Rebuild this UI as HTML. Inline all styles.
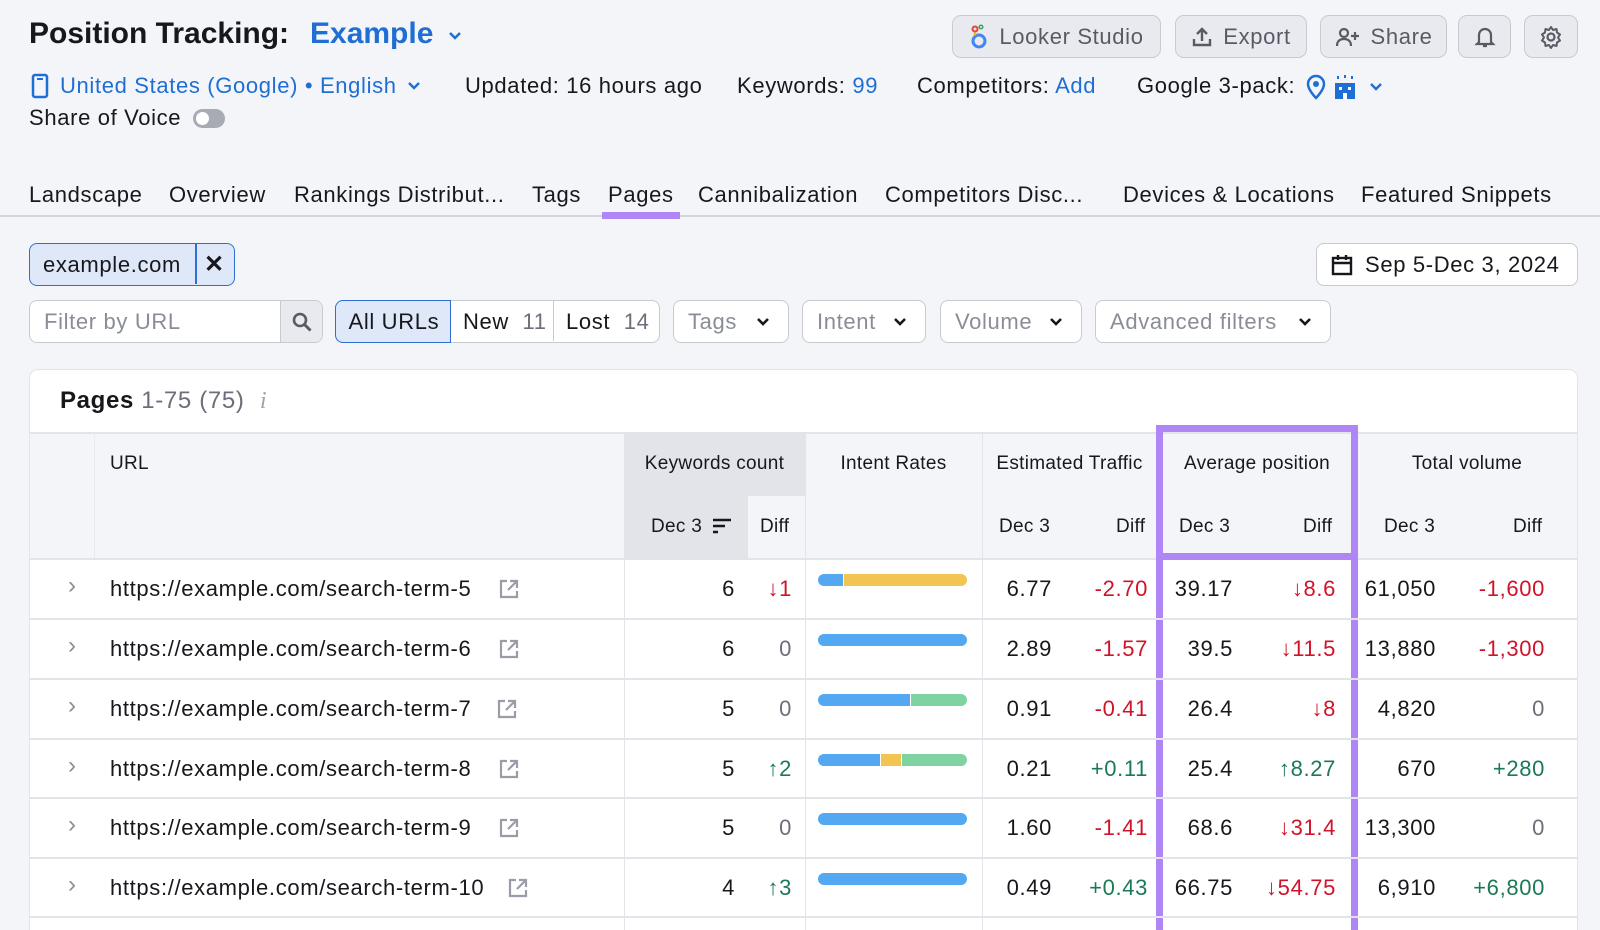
<!DOCTYPE html>
<html style="height:930px;overflow:hidden"><head><meta charset="utf-8"><style>
*{box-sizing:border-box;margin:0;padding:0}
body{width:1600px;height:930px;overflow:hidden;background:#f4f5f9;font-family:"Liberation Sans",sans-serif;color:#17181c;position:relative;font-size:22px;letter-spacing:0.65px}
.a{position:absolute;white-space:nowrap}
.blue{color:#1f6ed4}
.btn{position:absolute;border:1.5px solid #c8cad2;background:#e9eaf0;border-radius:9px;display:flex;align-items:center;justify-content:center;gap:10px;color:#585b65;font-size:22px}
.box{position:absolute;border:1.5px solid #c8cad2;background:#fff;border-radius:8px;display:flex;align-items:center;color:#8a8d97;font-size:22px;padding-left:14px}
.card{position:absolute;left:29px;top:369px;width:1549px;height:561px;background:#fff;border:1px solid #e3e4ea;border-bottom:none;border-radius:9px 9px 0 0;overflow:hidden}
.vl{position:absolute;width:1px;background:#e3e4ea}
.hl{position:absolute;height:1.5px;background:#e3e4ea}
.h{font-size:19px;letter-spacing:0.3px}
.r{text-align:right}
.red{color:#d1132a}.grn{color:#1b7a55}.gry{color:#6c6e79}
.bar{position:absolute;height:12px;border-radius:6px;overflow:hidden;display:flex;left:818px;width:149px}
.ch{position:absolute;left:68px;color:#8a8d97;font-size:24px}
</style></head><body>
<div class="a" style="left:29px;top:17px;font-size:30px;font-weight:bold;letter-spacing:0">Position Tracking:</div>
<div class="a blue" style="left:310px;top:17px;font-size:30px;font-weight:bold;letter-spacing:0">Example</div>
<svg class="a" style="left:447px;top:30px" width="16" height="12" viewBox="0 0 16 12"><path d="M3 3l5 5 5-5" stroke="#1f6ed4" stroke-width="2.5" fill="none"/></svg>

<div class="btn" style="left:952px;top:15px;width:209px;height:43px"><svg width="20" height="26" viewBox="0 0 20 26"><circle cx="10" cy="17" r="6" stroke="#4285f4" stroke-width="3" fill="none"/><circle cx="6" cy="5" r="2.5" stroke="#ea4335" stroke-width="2" fill="none"/><circle cx="12" cy="3" r="1.8" stroke="#34a853" stroke-width="1.5" fill="none"/><circle cx="6" cy="10" r="1.5" fill="#fbbc04"/></svg>Looker Studio</div>
<div class="btn" style="left:1175px;top:15px;width:132px;height:43px"><svg width="22" height="22" viewBox="0 0 22 22"><path d="M11 15V3M6 8l5-5 5 5M3 13v6h16v-6" stroke="#585b65" stroke-width="2.4" fill="none"/></svg>Export</div>
<div class="btn" style="left:1320px;top:15px;width:127px;height:43px"><svg width="26" height="22" viewBox="0 0 26 22"><circle cx="9" cy="7" r="4" stroke="#585b65" stroke-width="2.2" fill="none"/><path d="M2 20c0-5 3-7 7-7s7 2 7 7M20 6v8M16 10h8" stroke="#585b65" stroke-width="2.2" fill="none"/></svg>Share</div>
<div class="btn" style="left:1458px;top:15px;width:53px;height:43px"><svg width="22" height="24" viewBox="0 0 22 24"><path d="M5 17V10a6 6 0 0112 0v7l2 2H3z M9 21h4" stroke="#585b65" stroke-width="2.2" fill="none"/></svg></div>
<div class="btn" style="left:1524px;top:15px;width:54px;height:43px"><svg width="24" height="24" viewBox="0 0 24 24"><circle cx="12" cy="12" r="3.5" stroke="#585b65" stroke-width="2.2" fill="none"/><path d="M12 2l2 3 3.5-1 .5 3.5 3 2-2 3 2 3-3 2-.5 3.5-3.5-1-2 3-2-3-3.5 1-.5-3.5-3-2 2-3-2-3 3-2 .5-3.5 3.5 1z" stroke="#585b65" stroke-width="2" fill="none" stroke-linejoin="round"/></svg></div>

<svg class="a" style="left:31px;top:73px" width="18" height="26" viewBox="0 0 18 26"><rect x="2" y="2" width="14" height="22" rx="2" stroke="#1f6ed4" stroke-width="2.5" fill="none"/><path d="M6 6h6" stroke="#1f6ed4" stroke-width="2"/></svg>
<div class="a blue" style="left:60px;top:73px">United States (Google) • English</div>
<svg class="a" style="left:406px;top:80px" width="16" height="12" viewBox="0 0 16 12"><path d="M3 3l5 5 5-5" stroke="#1f6ed4" stroke-width="2.4" fill="none"/></svg>
<div class="a" style="left:465px;top:73px">Updated: 16 hours ago</div>
<div class="a" style="left:737px;top:73px">Keywords: <span class="blue">99</span></div>
<div class="a" style="left:917px;top:73px">Competitors: <span class="blue">Add</span></div>
<div class="a" style="left:1137px;top:73px">Google 3-pack:</div>
<svg class="a" style="left:1305px;top:73px" width="90" height="28" viewBox="0 0 90 28"><path d="M11 25s8-8 8-14a8 8 0 00-16 0c0 6 8 14 8 14z" stroke="#1f6ed4" stroke-width="2.5" fill="none"/><circle cx="11" cy="11" r="3" fill="#1f6ed4"/><rect x="30" y="10" width="20" height="16" fill="#1f6ed4"/><rect x="34" y="14" width="3" height="3" fill="#fff"/><rect x="43" y="14" width="3" height="3" fill="#fff"/><rect x="38" y="20" width="4" height="6" fill="#fff"/><path d="M33 3v3M40 2v3M47 3v3" stroke="#1f6ed4" stroke-width="2"/><path d="M66 11l5 5 5-5" stroke="#1f6ed4" stroke-width="2.4" fill="none"/></svg>
<div class="a" style="left:29px;top:105px">Share of Voice</div>
<div class="a" style="left:193px;top:109px;width:32px;height:19px;border-radius:10px;background:#a9abb4"><div style="position:absolute;left:3px;top:3px;width:13px;height:13px;border-radius:50%;background:#fff"></div></div>

<div class="a" style="left:29px;top:182px">Landscape</div>
<div class="a" style="left:169px;top:182px">Overview</div>
<div class="a" style="left:294px;top:182px">Rankings Distribut...</div>
<div class="a" style="left:532px;top:182px">Tags</div>
<div class="a" style="left:608px;top:182px">Pages</div>
<div class="a" style="left:698px;top:182px">Cannibalization</div>
<div class="a" style="left:885px;top:182px">Competitors Disc...</div>
<div class="a" style="left:1123px;top:182px">Devices &amp; Locations</div>
<div class="a" style="left:1361px;top:182px">Featured Snippets</div>
<div class="a" style="left:0;top:215px;width:1600px;height:2px;background:#d3d5dc"></div>
<div class="a" style="left:602px;top:212px;width:78px;height:7px;background:#b085f5"></div>

<div class="a" style="left:29px;top:243px;width:206px;height:43px;border:1.5px solid #2d6fd2;background:#dfe8f9;border-radius:8px">
<div class="a" style="left:13px;top:8px">example.com</div>
<div class="a" style="left:165px;top:0;width:1.5px;height:40px;background:#2d6fd2"></div>
<div class="a" style="left:174px;top:6px;font-size:24px;font-weight:bold">✕</div></div>
<div class="box" style="left:1316px;top:243px;width:262px;height:43px;color:#17181c;gap:12px"><svg width="22" height="24" viewBox="0 0 22 24"><rect x="2" y="5" width="18" height="16" stroke="#17181c" stroke-width="2.4" fill="none"/><path d="M2 10h18M7 2v5M15 2v5" stroke="#17181c" stroke-width="2.4"/></svg>Sep 5-Dec 3, 2024</div>

<div class="box" style="left:29px;top:300px;width:294px;height:43px;overflow:hidden">Filter by URL<div style="position:absolute;left:250px;top:0;width:44px;height:43px;background:#e9eaf0;border-left:1.5px solid #c8cad2"><svg style="position:absolute;left:10px;top:10px" width="22" height="22" viewBox="0 0 22 22"><circle cx="9" cy="9" r="6" stroke="#585b65" stroke-width="2.6" fill="none"/><path d="M13.5 13.5l6 6" stroke="#585b65" stroke-width="3"/></svg></div></div>
<div class="box" style="left:335px;top:300px;width:325px;height:43px;padding:0;color:#17181c;overflow:visible">
<div style="position:absolute;left:-1.5px;top:-1.5px;width:116px;height:43px;background:#dfe8f9;border:1.5px solid #2d6fd2;border-radius:8px 0 0 8px;padding:8px 0 0 13px">All URLs</div>
<div style="position:absolute;left:127px;top:8px">New <span class="gry">&nbsp;11</span></div>
<div style="position:absolute;left:217px;top:0;width:1px;height:40px;background:#c8cad2"></div>
<div style="position:absolute;left:230px;top:8px">Lost <span class="gry">&nbsp;14</span></div></div>
<div class="box" style="left:673px;top:300px;width:116px;height:43px">Tags<svg style="position:absolute;right:18px;top:16px" width="14" height="10" viewBox="0 0 14 10"><path d="M2 2l5 5 5-5" stroke="#17181c" stroke-width="2.6" fill="none"/></svg></div>
<div class="box" style="left:802px;top:300px;width:124px;height:43px">Intent<svg style="position:absolute;right:18px;top:16px" width="14" height="10" viewBox="0 0 14 10"><path d="M2 2l5 5 5-5" stroke="#17181c" stroke-width="2.6" fill="none"/></svg></div>
<div class="box" style="left:940px;top:300px;width:142px;height:43px">Volume<svg style="position:absolute;right:18px;top:16px" width="14" height="10" viewBox="0 0 14 10"><path d="M2 2l5 5 5-5" stroke="#17181c" stroke-width="2.6" fill="none"/></svg></div>
<div class="box" style="left:1095px;top:300px;width:236px;height:43px">Advanced filters<svg style="position:absolute;right:18px;top:16px" width="14" height="10" viewBox="0 0 14 10"><path d="M2 2l5 5 5-5" stroke="#17181c" stroke-width="2.6" fill="none"/></svg></div>

<div class="card"></div>
<div class="a" style="left:60px;top:387px;font-size:24px"><b>Pages</b> <span class="gry">1-75 (75)</span> <i style="color:#a0a2ab;font-family:'Liberation Serif',serif;margin-left:8px">i</i></div>
<div class="a" style="left:30px;top:433px;width:1547px;height:126px;background:#f4f5f9"></div>
<div class="a" style="left:624px;top:433px;width:181px;height:63px;background:#e3e4ea"></div>
<div class="a" style="left:624px;top:496px;width:124px;height:63px;background:#e3e4ea"></div>
<div class="hl" style="left:30px;top:432px;width:1547px"></div>
<div class="vl" style="left:94px;top:433px;height:126px;background:#e9eaef"></div>
<div class="vl" style="left:624px;top:433px;height:497px"></div>
<div class="vl" style="left:805px;top:433px;height:497px"></div>
<div class="vl" style="left:982px;top:433px;height:497px"></div>
<div class="hl" style="left:30px;top:558px;width:1547px"></div>
<div class="a h" style="left:110px;top:453px">URL</div>
<div class="a h" style="left:624px;top:453px;width:181px;text-align:center">Keywords count</div>
<div class="a h" style="left:651px;top:516px">Dec 3</div>
<svg class="a" style="left:712px;top:518px" width="20" height="18" viewBox="0 0 20 18"><path d="M1 2h18M1 8h12M1 14h5" stroke="#17181c" stroke-width="2.6"/></svg>
<div class="a h" style="left:760px;top:516px">Diff</div>
<div class="a h" style="left:805px;top:453px;width:177px;text-align:center">Intent Rates</div>
<div class="a h" style="left:982px;top:453px;width:175px;text-align:center">Estimated Traffic</div>
<div class="a h" style="left:999px;top:516px">Dec 3</div>
<div class="a h" style="left:1116px;top:516px">Diff</div>
<div class="a h" style="left:1157px;top:453px;width:200px;text-align:center">Average position</div>
<div class="a h" style="left:1179px;top:516px">Dec 3</div>
<div class="a h" style="left:1303px;top:516px">Diff</div>
<div class="a h" style="left:1357px;top:453px;width:220px;text-align:center">Total volume</div>
<div class="a h" style="left:1384px;top:516px">Dec 3</div>
<div class="a h" style="left:1513px;top:516px">Diff</div>
<div class="a" style="left:1156px;top:425px;width:202px;height:520px;border:7px solid #b085f5;border-bottom:none"></div>
<div class="a" style="left:1156px;top:553px;width:202px;height:7px;background:#b085f5"></div>

<div class="hl" style="left:30px;top:618px;width:1547px"></div>
<div class="hl" style="left:30px;top:678px;width:1547px"></div>
<div class="hl" style="left:30px;top:738px;width:1547px"></div>
<div class="hl" style="left:30px;top:797px;width:1547px"></div>
<div class="hl" style="left:30px;top:857px;width:1547px"></div>
<div class="hl" style="left:30px;top:916px;width:1547px"></div>

<div class="ch" style="top:572px">›</div>
<div class="a" style="left:110px;top:576px">https://example.com/search-term-5</div>
<div class="a r" style="left:640px;top:576px;width:95px">6</div><div class="a r red" style="left:750px;top:576px;width:42px">↓1</div>
<div class="bar" style="top:574px"><span style="width:25px;background:#54a8f2"></span><span style="flex:1;background:#f2c452;margin-left:1px"></span></div>
<div class="a r" style="left:990px;top:576px;width:62px">6.77</div><div class="a r red" style="left:1050px;top:576px;width:98px">-2.70</div>
<div class="a r" style="left:1165px;top:576px;width:68px">39.17</div><div class="a r red" style="left:1240px;top:576px;width:96px">↓8.6</div>
<div class="a r" style="left:1350px;top:576px;width:86px">61,050</div><div class="a r red" style="left:1430px;top:576px;width:115px">-1,600</div>

<div class="ch" style="top:632px">›</div>
<div class="a" style="left:110px;top:636px">https://example.com/search-term-6</div>
<div class="a r" style="left:640px;top:636px;width:95px">6</div><div class="a r gry" style="left:750px;top:636px;width:42px">0</div>
<div class="bar" style="top:634px;background:#54a8f2"></div>
<div class="a r" style="left:990px;top:636px;width:62px">2.89</div><div class="a r red" style="left:1050px;top:636px;width:98px">-1.57</div>
<div class="a r" style="left:1165px;top:636px;width:68px">39.5</div><div class="a r red" style="left:1240px;top:636px;width:96px">↓11.5</div>
<div class="a r" style="left:1350px;top:636px;width:86px">13,880</div><div class="a r red" style="left:1430px;top:636px;width:115px">-1,300</div>

<div class="ch" style="top:692px">›</div>
<div class="a" style="left:110px;top:696px">https://example.com/search-term-7</div>
<div class="a r" style="left:640px;top:696px;width:95px">5</div><div class="a r gry" style="left:750px;top:696px;width:42px">0</div>
<div class="bar" style="top:694px"><span style="width:92px;background:#54a8f2"></span><span style="flex:1;background:#7ed3a0;margin-left:1px"></span></div>
<div class="a r" style="left:990px;top:696px;width:62px">0.91</div><div class="a r red" style="left:1050px;top:696px;width:98px">-0.41</div>
<div class="a r" style="left:1165px;top:696px;width:68px">26.4</div><div class="a r red" style="left:1240px;top:696px;width:96px">↓8</div>
<div class="a r" style="left:1350px;top:696px;width:86px">4,820</div><div class="a r gry" style="left:1430px;top:696px;width:115px">0</div>

<div class="ch" style="top:752px">›</div>
<div class="a" style="left:110px;top:756px">https://example.com/search-term-8</div>
<div class="a r" style="left:640px;top:756px;width:95px">5</div><div class="a r grn" style="left:750px;top:756px;width:42px">↑2</div>
<div class="bar" style="top:754px"><span style="width:62px;background:#54a8f2"></span><span style="width:20px;background:#f2c452;margin-left:1px"></span><span style="flex:1;background:#7ed3a0;margin-left:1px"></span></div>
<div class="a r" style="left:990px;top:756px;width:62px">0.21</div><div class="a r grn" style="left:1050px;top:756px;width:98px">+0.11</div>
<div class="a r" style="left:1165px;top:756px;width:68px">25.4</div><div class="a r grn" style="left:1240px;top:756px;width:96px">↑8.27</div>
<div class="a r" style="left:1350px;top:756px;width:86px">670</div><div class="a r grn" style="left:1430px;top:756px;width:115px">+280</div>

<div class="ch" style="top:811px">›</div>
<div class="a" style="left:110px;top:815px">https://example.com/search-term-9</div>
<div class="a r" style="left:640px;top:815px;width:95px">5</div><div class="a r gry" style="left:750px;top:815px;width:42px">0</div>
<div class="bar" style="top:813px;background:#54a8f2"></div>
<div class="a r" style="left:990px;top:815px;width:62px">1.60</div><div class="a r red" style="left:1050px;top:815px;width:98px">-1.41</div>
<div class="a r" style="left:1165px;top:815px;width:68px">68.6</div><div class="a r red" style="left:1240px;top:815px;width:96px">↓31.4</div>
<div class="a r" style="left:1350px;top:815px;width:86px">13,300</div><div class="a r gry" style="left:1430px;top:815px;width:115px">0</div>

<div class="ch" style="top:871px">›</div>
<div class="a" style="left:110px;top:875px">https://example.com/search-term-10</div>
<div class="a r" style="left:640px;top:875px;width:95px">4</div><div class="a r grn" style="left:750px;top:875px;width:42px">↑3</div>
<div class="bar" style="top:873px;background:#54a8f2"></div>
<div class="a r" style="left:990px;top:875px;width:62px">0.49</div><div class="a r grn" style="left:1050px;top:875px;width:98px">+0.43</div>
<div class="a r" style="left:1165px;top:875px;width:68px">66.75</div><div class="a r red" style="left:1240px;top:875px;width:96px">↓54.75</div>
<div class="a r" style="left:1350px;top:875px;width:86px">6,910</div><div class="a r grn" style="left:1430px;top:875px;width:115px">+6,800</div>

<svg class="a" style="left:498px;top:578px" width="22" height="22" viewBox="0 0 22 22"><path d="M9 3H3v16h16v-6M12 3h7v7M19 3l-9 9" stroke="#9a9ca6" stroke-width="2.2" fill="none"/></svg>
<svg class="a" style="left:498px;top:638px" width="22" height="22" viewBox="0 0 22 22"><path d="M9 3H3v16h16v-6M12 3h7v7M19 3l-9 9" stroke="#9a9ca6" stroke-width="2.2" fill="none"/></svg>
<svg class="a" style="left:496px;top:698px" width="22" height="22" viewBox="0 0 22 22"><path d="M9 3H3v16h16v-6M12 3h7v7M19 3l-9 9" stroke="#9a9ca6" stroke-width="2.2" fill="none"/></svg>
<svg class="a" style="left:498px;top:758px" width="22" height="22" viewBox="0 0 22 22"><path d="M9 3H3v16h16v-6M12 3h7v7M19 3l-9 9" stroke="#9a9ca6" stroke-width="2.2" fill="none"/></svg>
<svg class="a" style="left:498px;top:817px" width="22" height="22" viewBox="0 0 22 22"><path d="M9 3H3v16h16v-6M12 3h7v7M19 3l-9 9" stroke="#9a9ca6" stroke-width="2.2" fill="none"/></svg>
<svg class="a" style="left:507px;top:877px" width="22" height="22" viewBox="0 0 22 22"><path d="M9 3H3v16h16v-6M12 3h7v7M19 3l-9 9" stroke="#9a9ca6" stroke-width="2.2" fill="none"/></svg>
</body></html>
